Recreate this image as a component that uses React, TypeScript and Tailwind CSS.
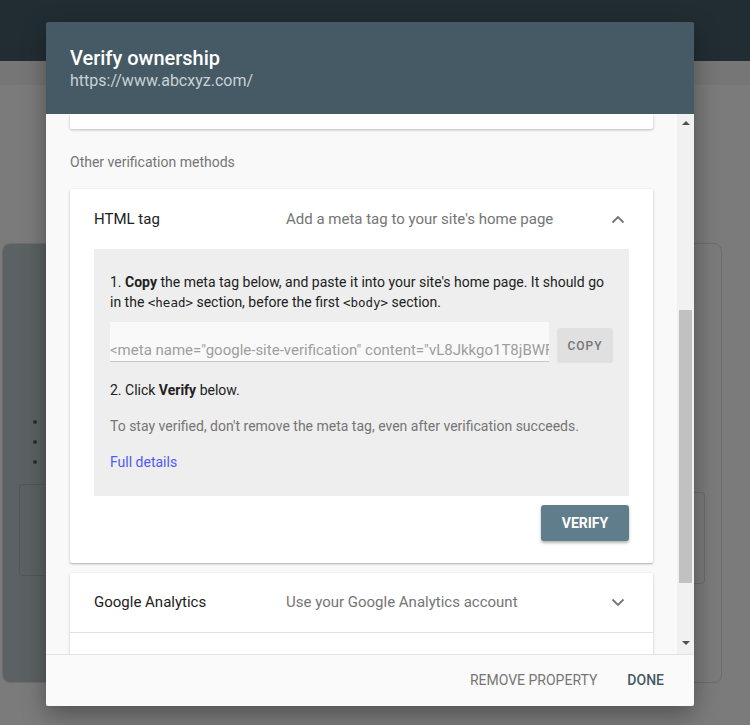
import React from "react";

function ChevronUp() {
  return (
    <svg width="14" height="9" viewBox="0 0 14 9" className="block">
      <path d="M1.5 7.5 L7 2 L12.5 7.5" fill="none" stroke="#757575" strokeWidth="1.8" />
    </svg>
  );
}
function ChevronDown() {
  return (
    <svg width="14" height="9" viewBox="0 0 14 9" className="block">
      <path d="M1.5 1.5 L7 7 L12.5 1.5" fill="none" stroke="#757575" strokeWidth="1.8" />
    </svg>
  );
}

function Background() {
  return (
    <div className="flex h-[725px] w-[750px] flex-col bg-[#7b7b7b]">
      <div className="h-[61px] shrink-0 bg-[#222d33]" />
      <div className="h-[24px] shrink-0 bg-[#767676]" />
      <div className="flex flex-1 pl-[2px] pr-[28px] pt-[158px]">
        <div className="flex h-[440px] flex-1 overflow-hidden rounded-lg border border-[#6c6c6c] bg-[#7b7b7b]">
          <div className="flex w-[44px] flex-col bg-[#5c6163] pt-[176px]">
            <div className="ml-[30px] flex flex-col gap-[16px]">
              <div className="h-[4px] w-[4px] rounded-full bg-[#2a2f31]" />
              <div className="h-[4px] w-[4px] rounded-full bg-[#2a2f31]" />
              <div className="h-[4px] w-[4px] rounded-full bg-[#2a2f31]" />
            </div>
            <div className="ml-[16px] mt-[20px] h-[92px] rounded-l-[4px] border-y border-l border-[#52585a]" />
          </div>
          <div className="flex flex-1 flex-col pt-[248px] pr-[16px]">
            <div className="h-[92px] rounded-r-[4px] border-y border-r border-[#6c6c6c]" />
          </div>
        </div>
      </div>
    </div>
  );
}

function Header() {
  return (
    <div className="bg-[#455a64] px-6 pb-[22px] pt-[24px]">
      <div className="text-[20px] font-medium leading-[24px] text-white">Verify ownership</div>
      <div className="text-[16px] leading-[22px] text-[#c9d1d5]">https://www.abcxyz.com/</div>
    </div>
  );
}

const mono = "font-['DejaVu_Sans_Mono',monospace] text-[12.5px]";

function HtmlTagCard() {
  return (
    <div className="rounded-[2px] bg-white px-6 pb-[22px] shadow-[0_1px_3px_rgba(0,0,0,0.2),0_1px_1px_rgba(0,0,0,0.12)]">
      <div className="flex h-[60px] items-center">
        <div className="w-[192px] text-[15px] text-[#212121]">HTML tag</div>
        <div className="flex-1 text-[15px] text-[#757575]">Add a meta tag to your site's home page</div>
        <div className="mr-[4px]">
          <ChevronUp />
        </div>
      </div>
      <div className="bg-[#eeeeee] px-4 pb-[24px] pt-[23px] text-[14px] leading-[20px] text-[#212121]">
        <p>
          1. <b>Copy</b> the meta tag below, and paste it into your site's home page. It should go in the{" "}
          <span className={mono}>&lt;head&gt;</span> section, before the first{" "}
          <span className={mono}>&lt;body&gt;</span> section.
        </p>
        <div className="mt-[9px] flex h-[40px] items-start gap-2">
          <div className="flex h-[40px] w-[439px] items-end overflow-hidden whitespace-nowrap border-b border-[#c6c6c6] bg-[#f9f9f9] pb-[1px] text-[15px] leading-[20px] text-[#9e9e9e]">
            &lt;meta name="google-site-verification" content="vL8Jkkgo1T8jBWFxq3Hk9dPzLmN0" /&gt;
          </div>
          <div className="mt-[6px] flex h-[35px] w-[56px] shrink-0 items-center justify-center rounded-[3px] bg-[#e0e0e0] text-[12px] font-medium tracking-[1px] text-[#757575]">
            COPY
          </div>
        </div>
        <p className="mt-[18px]">
          2. Click <b>Verify</b> below.
        </p>
        <p className="mt-[16px] text-[#757575]">To stay verified, don't remove the meta tag, even after verification succeeds.</p>
        <p className="mt-[16px] text-[#4e5bf2]">Full details</p>
      </div>
      <div className="mt-[9px] flex justify-end">
        <div className="flex h-[36px] w-[88px] items-center justify-center rounded-[3px] bg-[#607d8b] text-[14px] font-bold text-white shadow-[0_2px_3px_rgba(0,0,0,0.3)]">
          VERIFY
        </div>
      </div>
    </div>
  );
}

function Scrollbar() {
  return (
    <div className="flex w-[17px] shrink-0 flex-col items-center bg-[#f1f1f1]">
      <div className="mt-[7px] h-0 w-0 border-x-[4px] border-b-[4px] border-x-transparent border-b-[#505050]" />
      <div className="mt-[185px] h-[273px] w-[13px] bg-[#c1c1c1]" />
      <div className="mt-[58px] h-0 w-0 border-x-[4px] border-t-[4px] border-x-transparent border-t-[#505050]" />
    </div>
  );
}

function Body() {
  return (
    <div className="flex h-[540px] bg-[#f9f9f9]">
      <div className="flex-1 overflow-hidden px-6">
        <div className="h-[15px] rounded-b-[2px] bg-white shadow-[0_1px_3px_rgba(0,0,0,0.25)]" />
        <div className="mt-[23px] text-[14px] leading-[20px] text-[#757575]">Other verification methods</div>
        <div className="mt-[17px]">
          <HtmlTagCard />
        </div>
        <div className="mt-[10px] rounded-t-[2px] bg-white shadow-[0_1px_3px_rgba(0,0,0,0.2)]">
          <div className="flex h-[60px] items-center border-b border-[#e0e0e0] px-6">
            <div className="w-[192px] text-[15px] text-[#212121]">Google Analytics</div>
            <div className="flex-1 text-[15px] text-[#757575]">Use your Google Analytics account</div>
            <div className="mr-[4px]">
              <ChevronDown />
            </div>
          </div>
          <div className="h-[60px]" />
        </div>
      </div>
      <Scrollbar />
    </div>
  );
}

function Footer() {
  return (
    <div className="flex h-[52px] items-center justify-end gap-[30px] border-t border-[#e4e4e4] bg-[#fafafa] pr-[30px] text-[14px]">
      <span className="text-[#757575]">REMOVE PROPERTY</span>
      <span className="font-medium text-[#455a64]">DONE</span>
    </div>
  );
}

export default function App() {
  return (
    <div className="relative h-[725px] w-[750px] overflow-hidden font-['Roboto',sans-serif]">
      <Background />
      <div className="absolute left-[46px] top-[22px] w-[648px] overflow-hidden rounded-[2px] shadow-[0_8px_24px_rgba(0,0,0,0.35)]">
        <Header />
        <Body />
        <Footer />
      </div>
    </div>
  );
}
